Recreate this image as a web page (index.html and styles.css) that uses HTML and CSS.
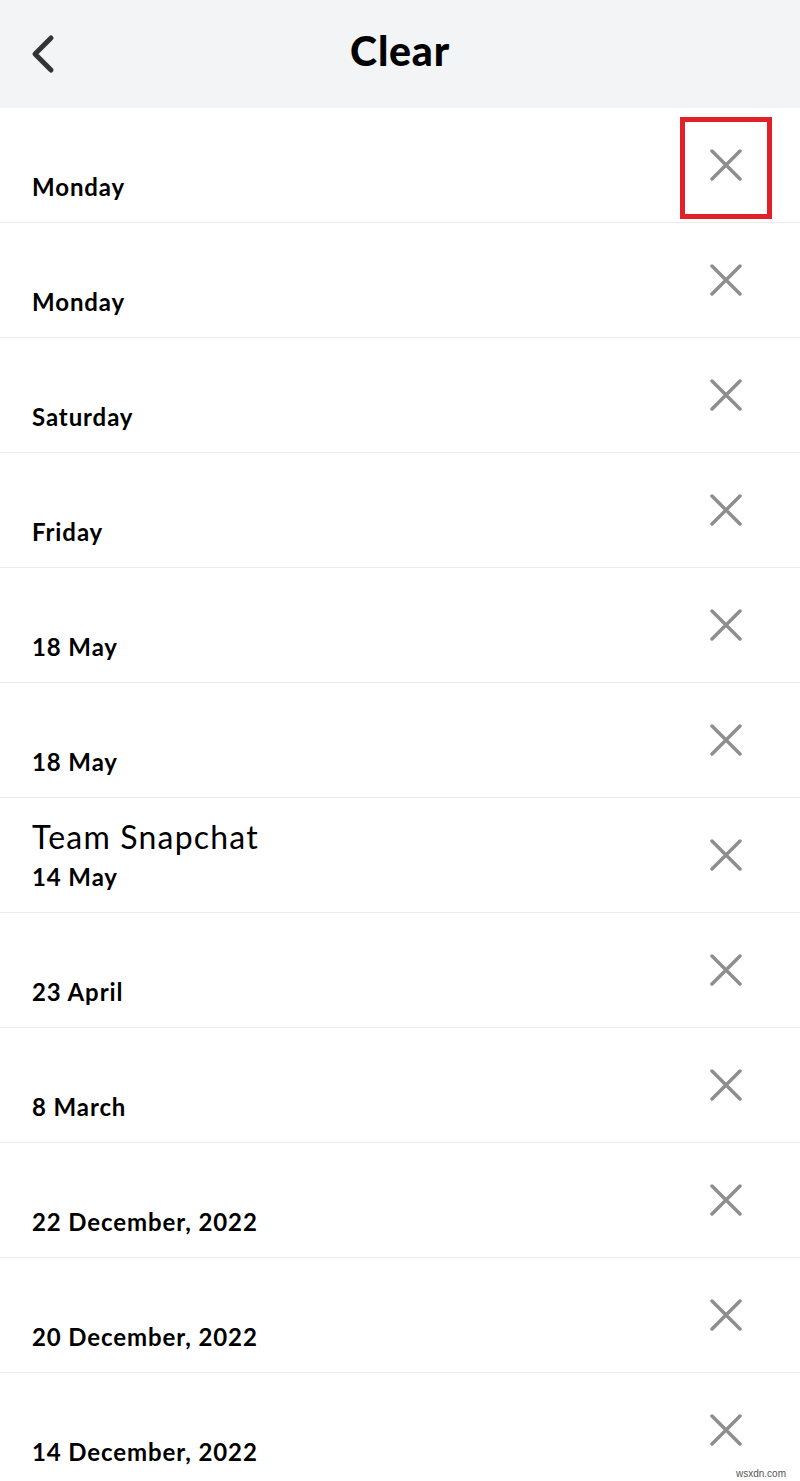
FILE: index.html
```html
<!DOCTYPE html>
<html lang="en">
<head>
    <meta charset="UTF-8">
    <meta name="viewport" content="width=device-width, initial-scale=1.0">
    <title>Clear</title>
    <link rel="stylesheet" href="styles.css">
</head>
<body>
    <header class="topbar">
        <button class="back-btn" aria-label="Back">
            <svg width="28" height="40" viewBox="0 0 28 40">
                <path d="M22 4 L6 20 L22 36" fill="none" stroke="#333" stroke-width="5" stroke-linecap="round" stroke-linejoin="round"/>
            </svg>
        </button>
        <h1 class="title">Clear</h1>
    </header>

    <ul class="chat-list">
        <li class="chat-row">
            <div class="chat-info"><span class="chat-name"></span><span class="chat-date">Monday</span></div>
            <button class="clear-btn marked" aria-label="Clear"><svg width="32" height="32" viewBox="0 0 32 32"><path d="M2 2 L30 30 M30 2 L2 30"/></svg></button>
        </li>
        <li class="chat-row">
            <div class="chat-info"><span class="chat-name"></span><span class="chat-date">Monday</span></div>
            <button class="clear-btn" aria-label="Clear"><svg width="32" height="32" viewBox="0 0 32 32"><path d="M2 2 L30 30 M30 2 L2 30"/></svg></button>
        </li>
        <li class="chat-row">
            <div class="chat-info"><span class="chat-name"></span><span class="chat-date">Saturday</span></div>
            <button class="clear-btn" aria-label="Clear"><svg width="32" height="32" viewBox="0 0 32 32"><path d="M2 2 L30 30 M30 2 L2 30"/></svg></button>
        </li>
        <li class="chat-row">
            <div class="chat-info"><span class="chat-name"></span><span class="chat-date">Friday</span></div>
            <button class="clear-btn" aria-label="Clear"><svg width="32" height="32" viewBox="0 0 32 32"><path d="M2 2 L30 30 M30 2 L2 30"/></svg></button>
        </li>
        <li class="chat-row">
            <div class="chat-info"><span class="chat-name"></span><span class="chat-date">18 May</span></div>
            <button class="clear-btn" aria-label="Clear"><svg width="32" height="32" viewBox="0 0 32 32"><path d="M2 2 L30 30 M30 2 L2 30"/></svg></button>
        </li>
        <li class="chat-row">
            <div class="chat-info"><span class="chat-name"></span><span class="chat-date">18 May</span></div>
            <button class="clear-btn" aria-label="Clear"><svg width="32" height="32" viewBox="0 0 32 32"><path d="M2 2 L30 30 M30 2 L2 30"/></svg></button>
        </li>
        <li class="chat-row">
            <div class="chat-info"><span class="chat-name">Team Snapchat</span><span class="chat-date">14 May</span></div>
            <button class="clear-btn" aria-label="Clear"><svg width="32" height="32" viewBox="0 0 32 32"><path d="M2 2 L30 30 M30 2 L2 30"/></svg></button>
        </li>
        <li class="chat-row">
            <div class="chat-info"><span class="chat-name"></span><span class="chat-date">23 April</span></div>
            <button class="clear-btn" aria-label="Clear"><svg width="32" height="32" viewBox="0 0 32 32"><path d="M2 2 L30 30 M30 2 L2 30"/></svg></button>
        </li>
        <li class="chat-row">
            <div class="chat-info"><span class="chat-name"></span><span class="chat-date">8 March</span></div>
            <button class="clear-btn" aria-label="Clear"><svg width="32" height="32" viewBox="0 0 32 32"><path d="M2 2 L30 30 M30 2 L2 30"/></svg></button>
        </li>
        <li class="chat-row">
            <div class="chat-info"><span class="chat-name"></span><span class="chat-date">22 December, 2022</span></div>
            <button class="clear-btn" aria-label="Clear"><svg width="32" height="32" viewBox="0 0 32 32"><path d="M2 2 L30 30 M30 2 L2 30"/></svg></button>
        </li>
        <li class="chat-row">
            <div class="chat-info"><span class="chat-name"></span><span class="chat-date">20 December, 2022</span></div>
            <button class="clear-btn" aria-label="Clear"><svg width="32" height="32" viewBox="0 0 32 32"><path d="M2 2 L30 30 M30 2 L2 30"/></svg></button>
        </li>
        <li class="chat-row">
            <div class="chat-info"><span class="chat-name"></span><span class="chat-date">14 December, 2022</span></div>
            <button class="clear-btn" aria-label="Clear"><svg width="32" height="32" viewBox="0 0 32 32"><path d="M2 2 L30 30 M30 2 L2 30"/></svg></button>
        </li>
    </ul>

    <span class="watermark">wsxdn.com</span>
</body>
</html>
```

FILE: styles.css
```css
* {
    margin: 0;
    padding: 0;
    box-sizing: border-box;
}

body {
    font-family: Lato, "Noto Sans", sans-serif;
    background-color: #fff;
    color: #000;
    overflow: hidden;
}

button {
    border: none;
    background: none;
    cursor: pointer;
}

/* top bar */
.topbar {
    position: relative;
    height: 108px;
    background-color: #f3f4f5;
    display: flex;
    align-items: center;
    justify-content: center;
}

.back-btn {
    position: absolute;
    left: 29px;
    top: 34px;
    display: flex;
}

.title {
    font-size: 41px;
    font-weight: 900;
    letter-spacing: 0.8px;
    margin-top: -8px;
}

/* list of chats */
.chat-list {
    list-style: none;
}

.chat-row {
    height: 115px;
    border-bottom: 1px solid #ebebeb;
    display: flex;
    align-items: center;
    justify-content: space-between;
    padding: 0 58px 0 32px;
}

.chat-info {
    align-self: flex-end;
    padding-bottom: 21px;
    display: flex;
    flex-direction: column;
}

.chat-name {
    font-size: 32px;
    line-height: 36px;
    min-height: 36px;
    letter-spacing: 1.2px;
    margin-bottom: 8px;
}

.chat-date {
    font-size: 24px;
    line-height: 28px;
    font-weight: 700;
    letter-spacing: 0.9px;
}

.clear-btn {
    position: relative;
    width: 32px;
    height: 32px;
    display: flex;
}

.clear-btn svg path {
    fill: none;
    stroke: #8e8e8e;
    stroke-width: 3.5;
    stroke-linecap: round;
}

.clear-btn.marked::after {
    content: '';
    position: absolute;
    top: -32px;
    bottom: -38px;
    left: -30px;
    right: -30px;
    border: 5px solid #e3202a;
}

.watermark {
    position: absolute;
    right: 14px;
    bottom: 2px;
    font-family: Arial, "Liberation Sans", sans-serif;
    font-size: 10px;
    color: #555;
}
```
